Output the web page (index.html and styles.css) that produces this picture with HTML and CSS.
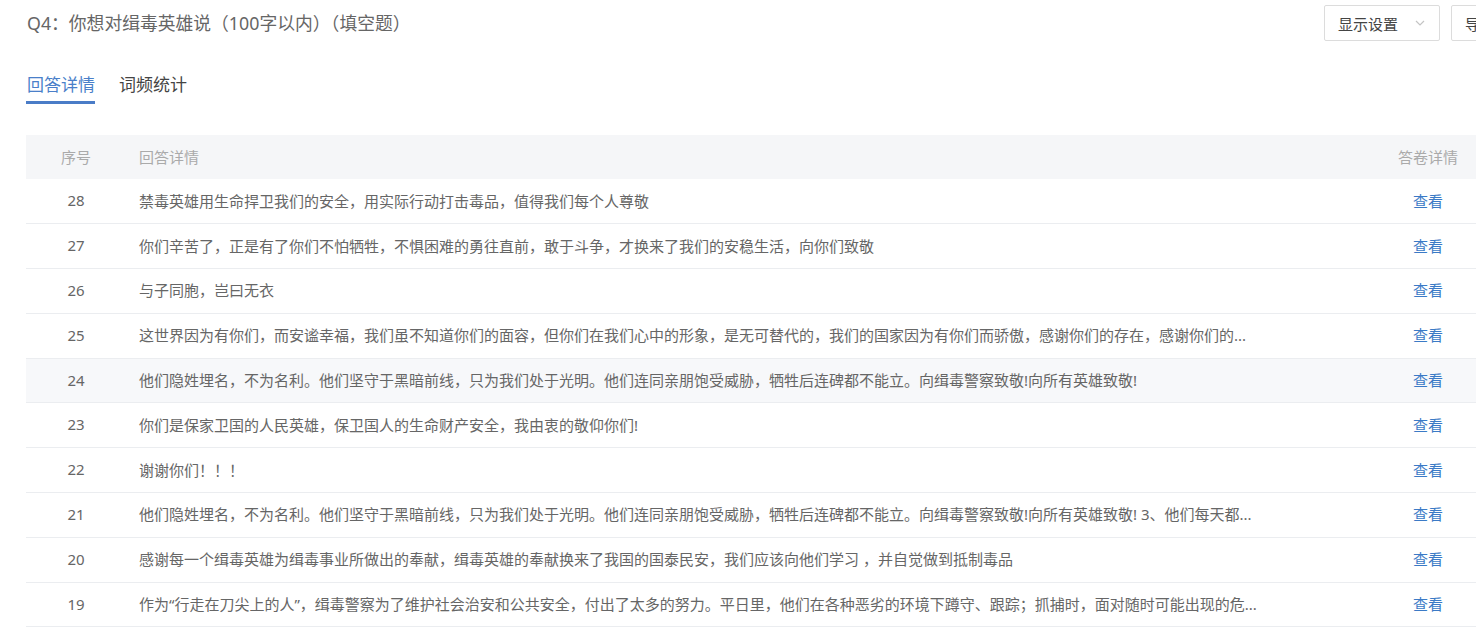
FILE: index.html
```html
<!DOCTYPE html>
<html lang="zh-CN">
<head>
    <meta charset="UTF-8">
    <meta name="viewport" content="width=device-width, initial-scale=1.0">
    <title>回答详情</title>
    <link rel="stylesheet" href="styles.css">
</head>
<body>
    <div class="page">
        <div class="toolbar">
            <div class="question-title">Q4：你想对缉毒英雄说（100字以内）（填空题）</div>
            <div class="actions">
                <div class="select-btn">
                    <span>显示设置</span>
                    <svg class="chevron" width="10" height="6" viewBox="0 0 10 6"><path d="M1 1l4 4 4-4" fill="none" stroke="#c4c4c4" stroke-width="1.2"/></svg>
                </div>
                <div class="select-btn export-btn">
                    <span>导出</span>
                    <svg class="chevron" width="10" height="6" viewBox="0 0 10 6"><path d="M1 1l4 4 4-4" fill="none" stroke="#c4c4c4" stroke-width="1.2"/></svg>
                </div>
            </div>
        </div>

        <div class="tabs">
            <div class="tab active">回答详情</div>
            <div class="tab">词频统计</div>
        </div>

        <table class="answer-table">
            <colgroup>
                <col class="col-no">
                <col class="col-text">
                <col class="col-view">
            </colgroup>
            <thead>
                <tr>
                    <th class="cell-no">序号</th>
                    <th class="cell-text">回答详情</th>
                    <th class="cell-view">答卷详情</th>
                </tr>
            </thead>
            <tbody>
                <tr>
                    <td class="cell-no">28</td>
                    <td class="cell-text">禁毒英雄用生命捍卫我们的安全，用实际行动打击毒品，值得我们每个人尊敬</td>
                    <td class="cell-view"><a href="#">查看</a></td>
                </tr>
                <tr>
                    <td class="cell-no">27</td>
                    <td class="cell-text">你们辛苦了，正是有了你们不怕牺牲，不惧困难的勇往直前，敢于斗争，才换来了我们的安稳生活，向你们致敬</td>
                    <td class="cell-view"><a href="#">查看</a></td>
                </tr>
                <tr>
                    <td class="cell-no">26</td>
                    <td class="cell-text">与子同胞，岂曰无衣</td>
                    <td class="cell-view"><a href="#">查看</a></td>
                </tr>
                <tr>
                    <td class="cell-no">25</td>
                    <td class="cell-text">这世界因为有你们，而安谧幸福，我们虽不知道你们的面容，但你们在我们心中的形象，是无可替代的，我们的国家因为有你们而骄傲，感谢你们的存在，感谢你们的...</td>
                    <td class="cell-view"><a href="#">查看</a></td>
                </tr>
                <tr class="hover">
                    <td class="cell-no">24</td>
                    <td class="cell-text">他们隐姓埋名，不为名利。他们坚守于黑暗前线，只为我们处于光明。他们连同亲朋饱受威胁，牺牲后连碑都不能立。向缉毒警察致敬!向所有英雄致敬!</td>
                    <td class="cell-view"><a href="#">查看</a></td>
                </tr>
                <tr>
                    <td class="cell-no">23</td>
                    <td class="cell-text">你们是保家卫国的人民英雄，保卫国人的生命财产安全，我由衷的敬仰你们!</td>
                    <td class="cell-view"><a href="#">查看</a></td>
                </tr>
                <tr>
                    <td class="cell-no">22</td>
                    <td class="cell-text">谢谢你们！！！</td>
                    <td class="cell-view"><a href="#">查看</a></td>
                </tr>
                <tr>
                    <td class="cell-no">21</td>
                    <td class="cell-text">他们隐姓埋名，不为名利。他们坚守于黑暗前线，只为我们处于光明。他们连同亲朋饱受威胁，牺牲后连碑都不能立。向缉毒警察致敬!向所有英雄致敬! 3、他们每天都...</td>
                    <td class="cell-view"><a href="#">查看</a></td>
                </tr>
                <tr>
                    <td class="cell-no">20</td>
                    <td class="cell-text">感谢每一个缉毒英雄为缉毒事业所做出的奉献，缉毒英雄的奉献换来了我国的国泰民安，我们应该向他们学习 ，并自觉做到抵制毒品</td>
                    <td class="cell-view"><a href="#">查看</a></td>
                </tr>
                <tr>
                    <td class="cell-no">19</td>
                    <td class="cell-text">作为“行走在刀尖上的人”，缉毒警察为了维护社会治安和公共安全，付出了太多的努力。平日里，他们在各种恶劣的环境下蹲守、跟踪；抓捕时，面对随时可能出现的危...</td>
                    <td class="cell-view"><a href="#">查看</a></td>
                </tr>
            </tbody>
        </table>
    </div>
</body>
</html>
```

FILE: styles.css
```css
html, body {
    overflow: hidden;
}

body {
    margin: 0;
    padding: 0;
    background-color: #fff;
    font-family: "Noto Sans", "Noto Sans CJK SC", "Microsoft YaHei", sans-serif;
    color: #666;
}

.page {
    width: 1531px;
    box-sizing: border-box;
    padding-left: 26px;
}

/* top bar: question title + buttons */
.toolbar {
    display: flex;
    justify-content: space-between;
    align-items: center;
    height: 36px;
    margin-top: 5px;
}

.question-title {
    font-size: 17.8px;
    color: #666;
    padding-left: 1px;
    padding-bottom: 2px;
}

.actions {
    display: flex;
    gap: 11px;
}

.select-btn {
    display: flex;
    align-items: center;
    justify-content: space-between;
    width: 116px;
    height: 36px;
    box-sizing: border-box;
    padding: 0 14px 0 13px;
    border: 1px solid #dcdcdc;
    border-radius: 2px;
    font-size: 15px;
    color: #444;
}

.export-btn {
    width: 80px;
}

.chevron {
    display: block;
}

/* tabs */
.tabs {
    display: flex;
    gap: 23px;
    margin-top: 32px;
}

.tab {
    font-size: 17px;
    line-height: 24px;
    padding: 0 0 4px 1px;
    border-bottom: 3px solid transparent;
    color: #444;
}

.tab.active {
    color: #4a7fc9;
    border-bottom-color: #4a7cc7;
}

/* answers table */
.answer-table {
    width: 1450px;
    margin-top: 31px;
    border-collapse: collapse;
    table-layout: fixed;
    font-size: 15px;
}

.col-no {
    width: 100px;
}

.col-view {
    width: 100px;
}

.answer-table th {
    height: 44px;
    background-color: #f5f6f8;
    color: #aaa;
    font-weight: normal;
}

.answer-table td {
    height: 44.8px;
    border-bottom: 1px solid #ebedf0;
    color: #666;
}

.answer-table th, .answer-table td {
    padding: 0 0 2px 0;
    box-sizing: border-box;
}

.cell-no {
    text-align: center;
}

.cell-text {
    text-align: left;
    padding-left: 13px !important;
    padding-right: 110px !important;
    white-space: nowrap;
    overflow: hidden;
    text-overflow: ellipsis;
}

th.cell-view {
    text-align: right;
    padding-right: 18px !important;
}

td.cell-view {
    text-align: center;
    padding-left: 4px !important;
}

.cell-view a {
    color: #3b7ac6;
    text-decoration: none;
}

.answer-table tr.hover td {
    background-color: #f7f8fa;
}
```
